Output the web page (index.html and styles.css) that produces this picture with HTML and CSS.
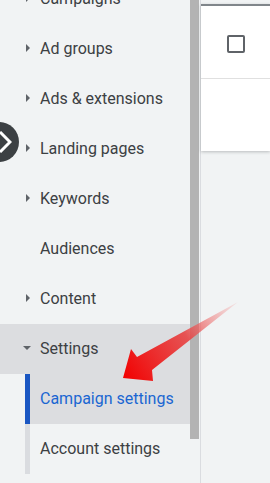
FILE: index.html
```html
<!DOCTYPE html>
<html>
<head>
    <meta charset="utf-8">
    <link rel="stylesheet" href="styles.css">
</head>
<body>
    <div class="page">
        <div class="sidebar">
            <ul class="nav">
                <li class="nav-item"><span class="caret"></span>Campaigns</li>
                <li class="nav-item"><span class="caret"></span>Ad groups</li>
                <li class="nav-item"><span class="caret"></span>Ads &amp; extensions</li>
                <li class="nav-item"><span class="caret"></span>Landing pages</li>
                <li class="nav-item"><span class="caret"></span>Keywords</li>
                <li class="nav-item"><span class="caret blank"></span>Audiences</li>
                <li class="nav-item"><span class="caret"></span>Content</li>
                <li class="nav-item open"><span class="caret down"></span>Settings</li>
                <li>
                    <ul class="sub-nav">
                        <li class="sub-item active">Campaign settings</li>
                        <li class="sub-item">Account settings</li>
                    </ul>
                </li>
            </ul>
            <div class="scroll">
                <div class="thumb"></div>
            </div>
        </div>
        <div class="main">
            <div class="card">
                <div class="card-head">
                    <span class="checkbox"></span>
                </div>
                <div class="card-row"></div>
            </div>
        </div>
    </div>

    <!-- collapse toggle, sits over the left edge -->
    <div class="toggle">
        <svg width="14" height="22" viewBox="0 0 14 22">
            <path d="M2 1 L12 11 L2 21" fill="none" stroke="#fff" stroke-width="3"/>
        </svg>
    </div>

    <!-- annotation arrow -->
    <svg class="pointer" width="270" height="483" viewBox="0 0 270 483">
        <defs>
            <linearGradient id="arrowFill" x1="238" y1="302" x2="123" y2="378" gradientUnits="userSpaceOnUse">
                <stop offset="0" stop-color="#f4b8b8" stop-opacity="0.3"/>
                <stop offset="0.45" stop-color="#e83a3a" stop-opacity="0.85"/>
                <stop offset="1" stop-color="#f20000"/>
            </linearGradient>
        </defs>
        <path d="M238 302 L152 370 L153 381 L123 378 L131 349 L137 357 Z" fill="url(#arrowFill)"/>
    </svg>
</body>
</html>
```

FILE: styles.css
```css
html,
body {
    margin: 0;
    height: 100%;
    background-color: #f1f3f4;
    font-family: Roboto, "Liberation Sans", sans-serif;
    overflow: hidden;
}

.page {
    display: flex;
    height: 100%;
}

.sidebar {
    width: 200px;
    display: flex;
    border-right: 1px solid #dadce0;
    flex-shrink: 0;
}

.nav {
    list-style: none;
    margin: -26px 0 0 0;
    padding: 0;
    width: 190px;
}

.nav-item {
    height: 50px;
    box-sizing: border-box;
    display: flex;
    align-items: center;
    padding-left: 26px;
    padding-bottom: 2px;
    font-size: 16px;
    color: #3c4043;
}

.nav-item.open {
    background-color: #dcdde0;
    padding-left: 23px;
}

.caret {
    width: 0;
    height: 0;
    border-top: 4px solid transparent;
    border-bottom: 4px solid transparent;
    border-left: 4px solid #5f6368;
    margin-right: 10px;
}

.caret.blank {
    border-left-color: transparent;
}

.caret.down {
    border-left: 4px solid transparent;
    border-right: 4px solid transparent;
    border-top: 4px solid #5f6368;
    border-bottom: 0;
    margin-right: 9px;
}

.sub-nav {
    list-style: none;
    margin: 0 0 0 25px;
    padding: 0;
}

.sub-item {
    height: 50px;
    box-sizing: border-box;
    display: flex;
    align-items: center;
    padding-left: 10px;
    padding-bottom: 2px;
    border-left: 5px solid #dadce0;
    font-size: 16px;
    color: #3c4043;
}

.sub-item.active {
    border-left-color: #1a56c2;
    background-color: #dcdde0;
    color: #1a66d2;
}

.scroll {
    width: 9px;
}

.thumb {
    height: 439px;
    background-color: #b3b3b3;
}

.main {
    flex: 1;
}

.card {
    background-color: #fff;
    border-top: 2px solid #80868b;
    margin-top: 4px;
    height: 145px;
    box-shadow: 0 1px 3px rgba(60, 64, 67, 0.3);
}

.card-head {
    height: 72px;
    padding-left: 26px;
    display: flex;
    align-items: center;
    border-bottom: 1px solid #e0e0e0;
}

.checkbox {
    width: 14px;
    height: 14px;
    border: 2px solid #5f6368;
    border-radius: 2px;
    margin-top: 3px;
}

.toggle {
    position: absolute;
    left: -21px;
    top: 122px;
    width: 40px;
    height: 40px;
    border-radius: 50%;
    background-color: #3c4043;
    display: flex;
    align-items: center;
    justify-content: flex-end;
}

.toggle svg {
    margin-right: 7px;
}

.pointer {
    position: absolute;
    left: 0;
    top: 0;
    pointer-events: none;
}
```
